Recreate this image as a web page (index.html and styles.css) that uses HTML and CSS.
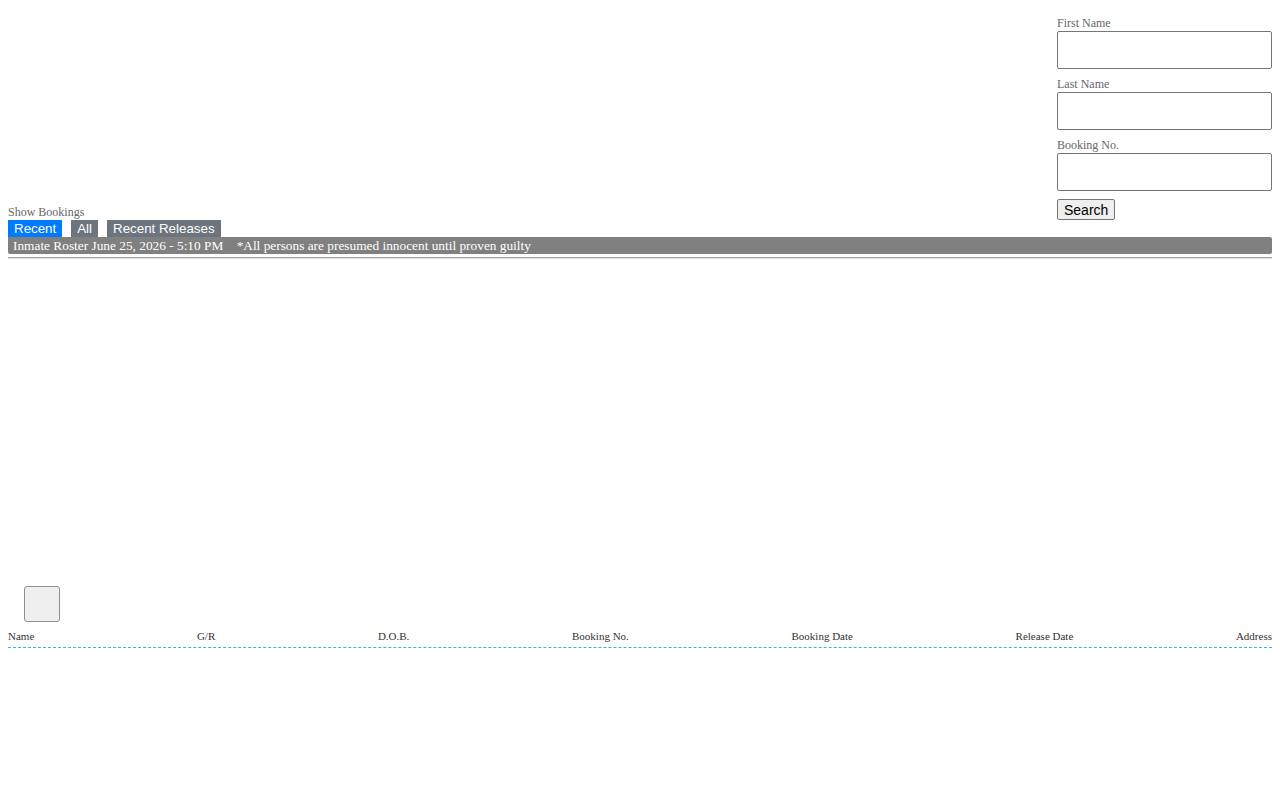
FILE: index.html
```html
<!DOCTYPE html>
<html lang="en">
<head>
  <meta charset="UTF-8">
  <meta name="viewport" content="width=device-width, initial-scale=1.0">
  <title>Inmate Roster</title>
  <link rel="stylesheet" href="styles.css">
</head>
<body>
  <div class="header">
    <div class="bookings">
      <div class="small-label">Show Bookings</div>
      <div class="tabs">
        <a href="#" class="tab active">Recent</a>
        <a href="#" class="tab">All</a>
        <a href="#" class="tab">Recent Releases</a>
      </div>
    </div>

    <!-- Search form -->
    <form class="search" onsubmit="return false;">
      <label class="small-label" for="firstName">First Name</label>
      <input type="text" id="firstName">
      <label class="small-label" for="lastName">Last Name</label>
      <input type="text" id="lastName">
      <label class="small-label" for="bookingNo">Booking No.</label>
      <input type="text" id="bookingNo">
      <button type="submit" class="search-btn">Search</button>
    </form>
  </div>

  <div class="roster-bar">
    <span>Inmate Roster June 25, 2026 - 5:10 PM</span>
    <span class="notice">*All persons are presumed innocent until proven guilty</span>
  </div>
  <hr class="divider">

  <div id="roster-content"></div>

  <button class="page-btn"></button>

  <div class="roster-head">
    <span>Name</span>
    <span>G/R</span>
    <span>D.O.B.</span>
    <span>Booking No.</span>
    <span>Booking Date</span>
    <span>Release Date</span>
    <span>Address</span>
  </div>
</body>
</html>
```

FILE: styles.css
```css
body {
  font-family: "Liberation Serif", "Times New Roman", serif;
  margin: 8px;
  background: #fff;
}

.header {
  display: flex;
  justify-content: space-between;
  align-items: flex-end;
}

.small-label {
  display: block;
  font-size: 12px;
  line-height: 15px;
  color: #666;
}

.bookings .small-label {
  line-height: 16px;
}

.tabs {
  display: flex;
  gap: 9px;
}

.tab {
  display: block;
  font-family: "Liberation Sans", Arial, sans-serif;
  font-size: 13.33px;
  line-height: 17px;
  padding: 0 6px;
  color: #fff;
  background: #6c757d;
  text-decoration: none;
}

.tab.active {
  background: #007bff;
}

.search {
  width: 215px;
  margin-top: 8px;
  margin-bottom: 17px;
}

.search input {
  display: block;
  box-sizing: border-box;
  width: 100%;
  height: 38px;
  margin: 0 0 8px;
  border: 1px solid #767676;
  border-radius: 2px;
}

.search-btn {
  display: block;
  height: 21px;
  padding: 0 6px;
  font-family: "Liberation Sans", Arial, sans-serif;
  font-size: 14px;
  color: #000;
  background: #efefef;
  border: 1px solid #767676;
  border-radius: 2px;
}

.roster-bar {
  height: 17px;
  line-height: 17px;
  padding-left: 5px;
  background: #808080;
  color: #fff;
  font-size: 13.33px;
  border-radius: 0 2px 2px 2px;
  white-space: nowrap;
}

.roster-bar .notice {
  margin-left: 10px;
}

.divider {
  margin: 3px 0 0;
  border: none;
  border-top: 1px solid #a0a0a0;
  border-bottom: 1px solid #e0e0e0;
}

#roster-content {
  height: 327px;
}

.page-btn {
  display: block;
  width: 36px;
  height: 36px;
  margin-left: 16px;
  background: #efefef;
  border: 1px solid #8f8f8f;
  border-radius: 3px;
}

.roster-head {
  display: flex;
  justify-content: space-between;
  margin-top: 7px;
  padding-bottom: 4px;
  font-size: 11px;
  line-height: 14px;
  color: #333;
  border-bottom: 1px dashed #3fb0dc;
}
```
